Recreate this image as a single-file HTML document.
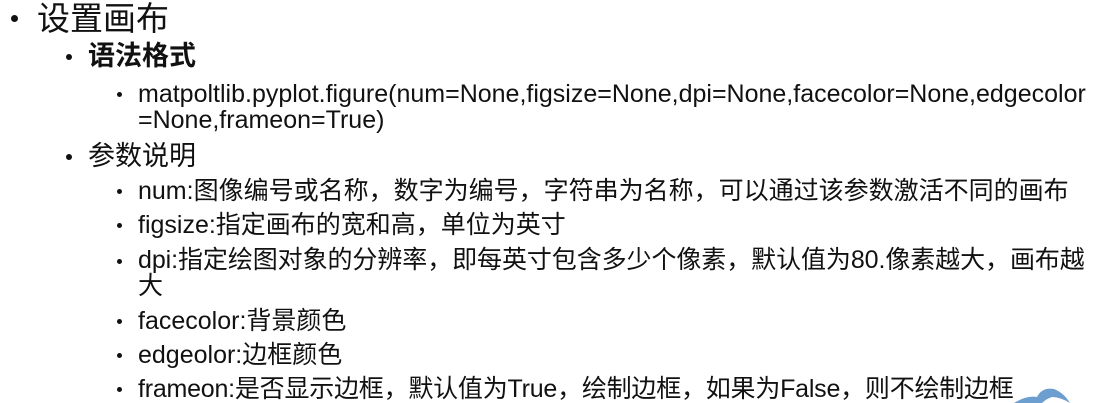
<!DOCTYPE html>
<html><head><meta charset="utf-8"><style>
body{margin:0;width:1101px;height:403px;background:#fff;overflow:hidden;position:relative;font-family:"Liberation Sans","Noto Sans CJK SC",sans-serif;color:#111}
.l{position:absolute;white-space:nowrap;line-height:1}
.b{position:absolute;width:6px;height:6px;border-radius:50%;background:#111}
.s{font-size:25px}
</style></head><body>
<div class="b" style="left:11px;top:15px;width:7px;height:7px"></div>
<div class="l" style="left:37px;top:2px;font-size:33px">设置画布</div>
<div class="b" style="left:66px;top:54px"></div>
<div class="l" style="left:88px;top:43px;font-size:27px;font-weight:bold">语法格式</div>
<div class="b" style="left:117px;top:92px;width:5px;height:5px"></div>
<div class="l s" style="left:138px;top:82px">matpoltlib.pyplot.figure(num=None,figsize=None,dpi=None,facecolor=None,edgecolor</div>
<div class="l s" style="left:138px;top:108px">=None,frameon=True)</div>
<div class="b" style="left:66px;top:154px"></div>
<div class="l" style="left:88px;top:143px;font-size:27px">参数说明</div>
<div class="b" style="left:117px;top:189px;width:5px;height:5px"></div>
<div class="l s" style="left:138px;top:179px">num:图像编号或名称，数字为编号，字符串为名称，可以通过该参数激活不同的画布</div>
<div class="b" style="left:117px;top:223px;width:5px;height:5px"></div>
<div class="l s" style="left:138px;top:213px">figsize:指定画布的宽和高，单位为英寸</div>
<div class="b" style="left:117px;top:259px;width:5px;height:5px"></div>
<div class="l s" style="left:138px;top:248px;letter-spacing:-0.08px">dpi:指定绘图对象的分辨率，即每英寸包含多少个像素，默认值为80.像素越大，画布越</div>
<div class="l s" style="left:138px;top:274px">大</div>
<div class="b" style="left:117px;top:319px;width:5px;height:5px"></div>
<div class="l s" style="left:138px;top:309px">facecolor:背景颜色</div>
<div class="b" style="left:117px;top:353px;width:5px;height:5px"></div>
<div class="l s" style="left:138px;top:343px">edgeolor:边框颜色</div>
<div class="b" style="left:117px;top:387px;width:5px;height:5px"></div>
<div class="l s" style="left:138px;top:377px;letter-spacing:-0.22px">frameon:是否显示边框，默认值为True，绘制边框，如果为False，则不绘制边框</div>
<svg style="position:absolute;left:1012px;top:385px" width="60" height="18"><path d="M2 18 Q15 10 25 12 Q30 2 42 4 Q52 8 58 18 Q48 12 40 12 Q34 14 30 18 Z" fill="#6c9fcf"/></svg>
</body></html>
